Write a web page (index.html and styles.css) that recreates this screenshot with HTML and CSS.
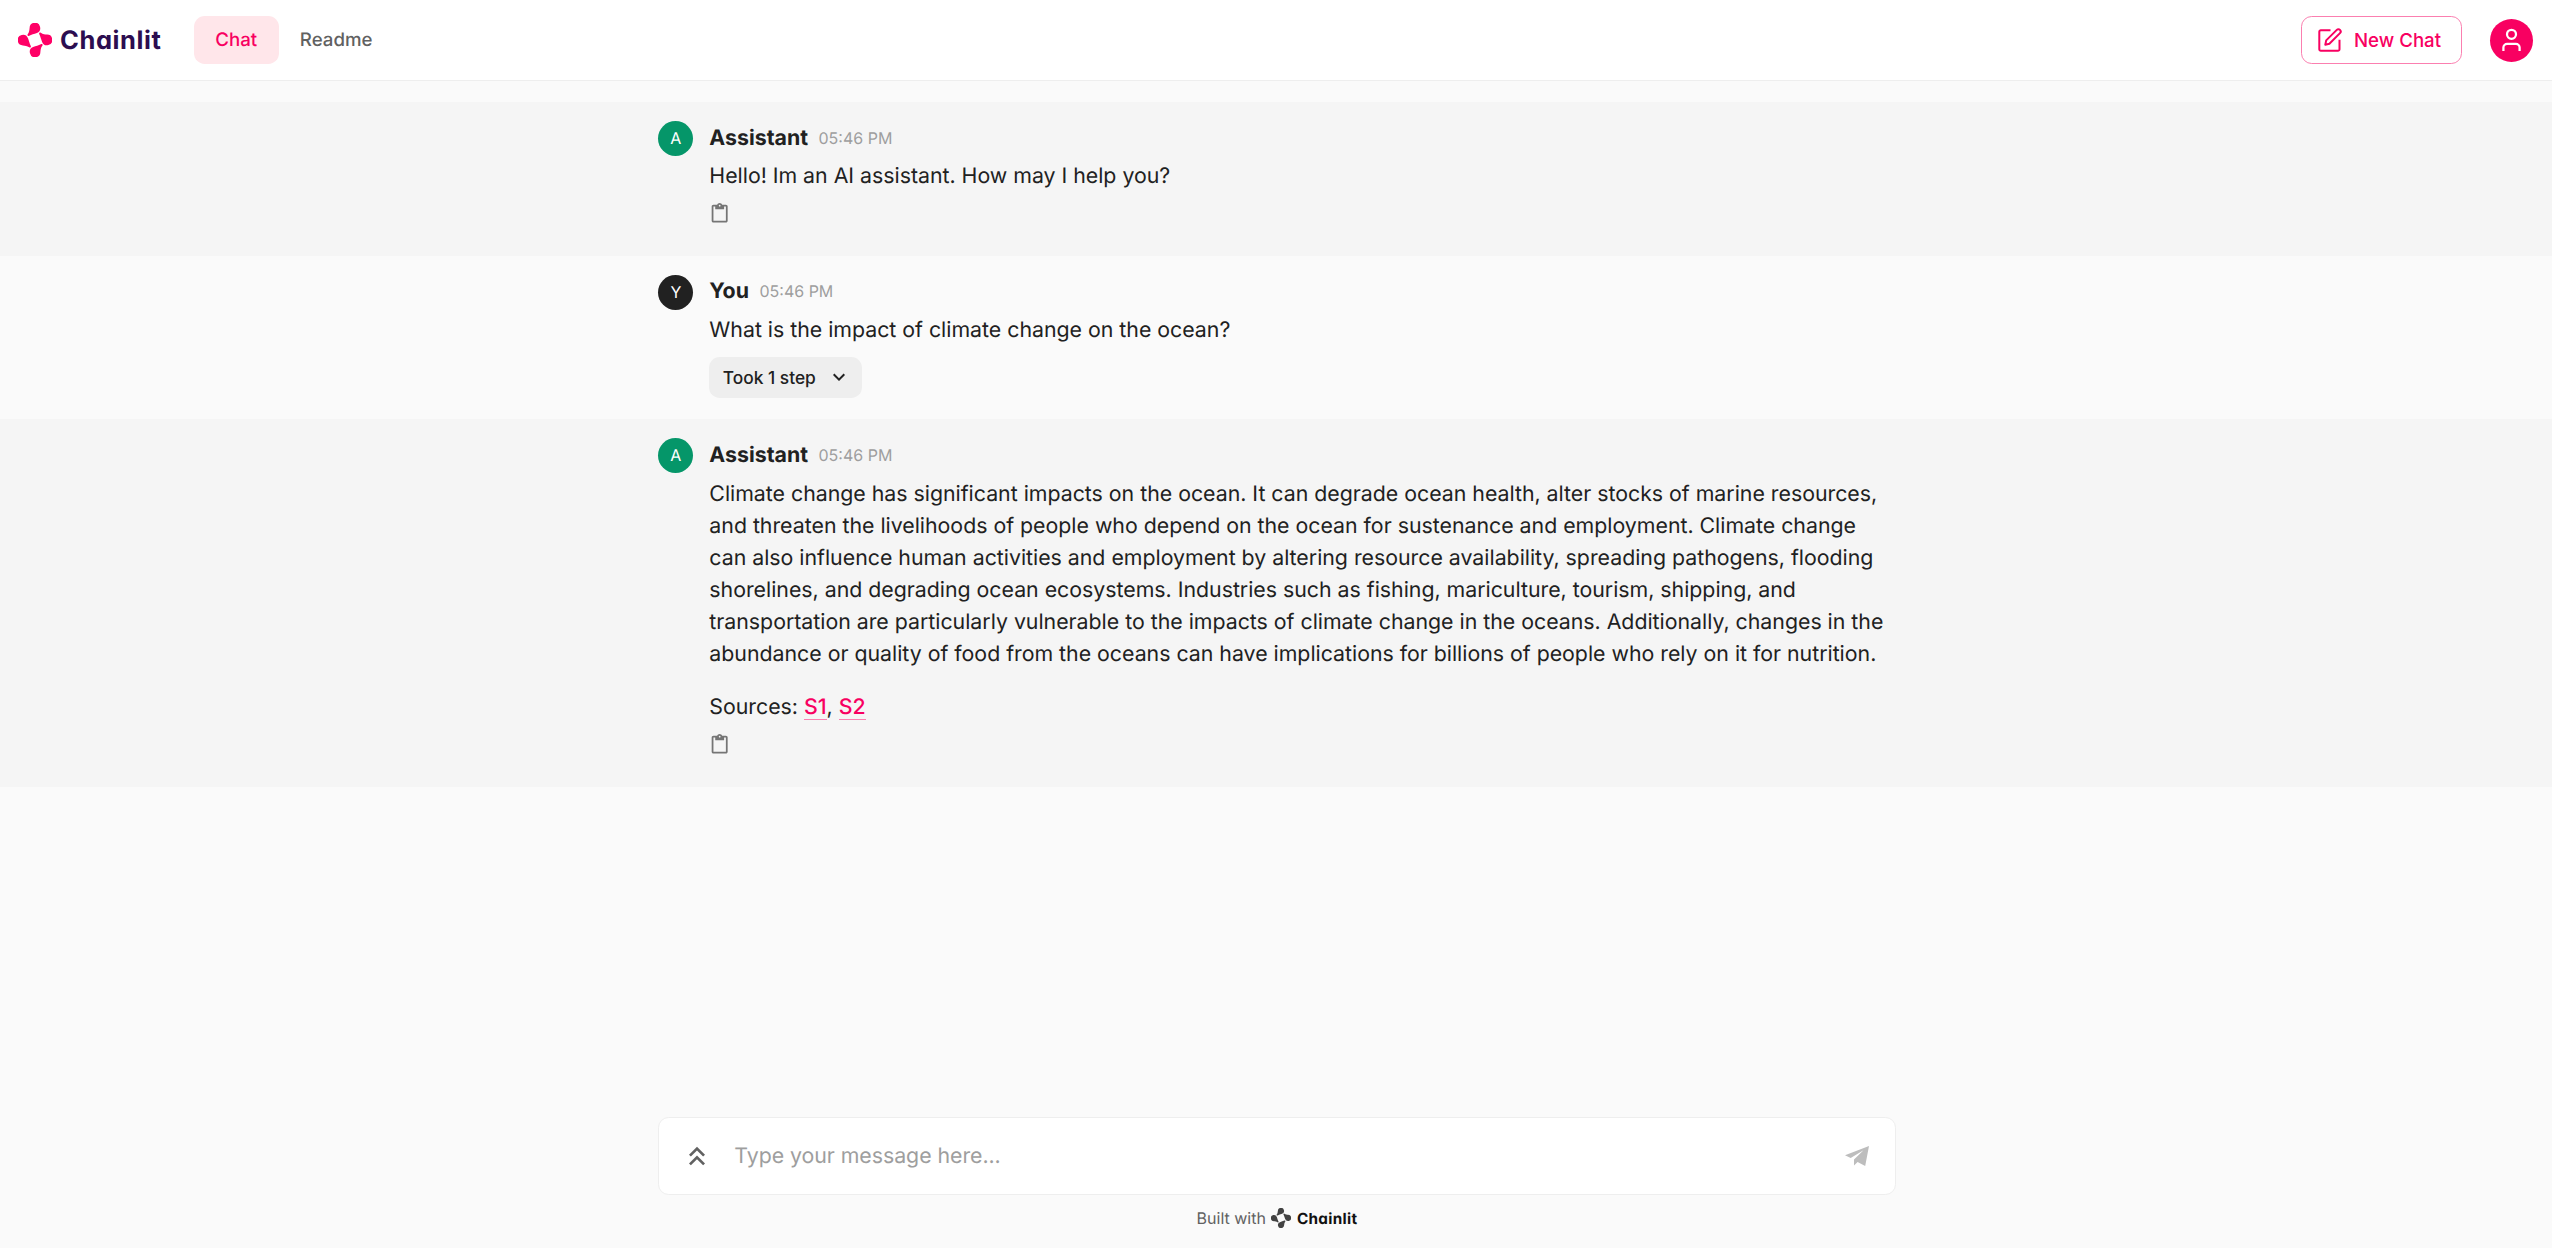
FILE: index.html
```html
<!DOCTYPE html>
<html lang="en">
<head>
<meta charset="utf-8">
<title>Chainlit</title>
<link rel="stylesheet" href="styles.css">
</head>
<body>
<svg class="defs" width="0" height="0" aria-hidden="true">
  <symbol id="mark" viewBox="0 0 34 34">
    <path id="petal" d="M11.200 12.700C9.800 13.400 8.900 12.200 9.700 11.200C11.300 9 11.400 7 11.600 4.900A5.300 5.300 0 1 1 18.900 9.900C16 11 13.500 11.500 11.200 12.700Z"/>
    <use href="#petal" transform="rotate(90 17 17)"/>
    <use href="#petal" transform="rotate(180 17 17)"/>
    <use href="#petal" transform="rotate(270 17 17)"/>
  </symbol>
  <symbol id="clipboard" viewBox="0 0 24 24">
    <path d="M19 2h-4.180C14.400.840 13.300 0 12 0S9.600.840 9.180 2H5c-1.100 0-2 .900-2 2v16c0 1.100.900 2 2 2h14c1.100 0 2-.900 2-2V4c0-1.100-.900-2-2-2zm-7 0c.550 0 1 .450 1 1s-.450 1-1 1-1-.450-1-1 .450-1 1-1zm7 18H5V4h2v3h10V4h2v16z"/>
  </symbol>
</svg>
<header class="header">
  <div class="header-left">
    <div class="logo">
      <svg class="logo-mark"><use href="#mark"/></svg>
      <span class="logo-text">Chainlit</span>
    </div>
    <nav class="nav">
      <a class="nav-item active">Chat</a>
      <a class="nav-item">Readme</a>
    </nav>
  </div>
  <div class="header-right">
    <button class="new-chat">
      <svg viewBox="0 0 24 24"><path d="M12.500 2.300H2.800a1.500 1.500 0 0 0-1.500 1.500v17.400a1.500 1.500 0 0 0 1.500 1.500h17.200a1.500 1.500 0 0 0 1.500-1.500V11.800"/><path d="M7.300 16.700l.9-4.300L18.800 1.900a2.260 2.260 0 0 1 3.200 3.200L11.400 15.700z"/></svg>
      <span>New Chat</span>
    </button>
    <div class="user">
      <svg viewBox="0 0 24 24"><circle cx="12" cy="6.500" r="4"/><path d="M4.800 21.300v-3a3.300 3.300 0 0 1 3.300-3.300h7.800a3.300 3.300 0 0 1 3.300 3.300v3"/></svg>
    </div>
  </div>
</header>
<main class="thread">
  <section class="message shaded first">
    <div class="row">
      <div class="avatar green">A</div>
      <div class="body">
        <div class="meta"><span class="name">Assistant</span><time>05:46 PM</time></div>
        <p>Hello! Im an AI assistant. How may I help you?</p>
        <svg class="copy"><use href="#clipboard"/></svg>
      </div>
    </div>
  </section>
  <section class="message second">
    <div class="row">
      <div class="avatar dark">Y</div>
      <div class="body">
        <div class="meta"><span class="name">You</span><time>05:46 PM</time></div>
        <p>What is the impact of climate change on the ocean?</p>
        <button class="steps"><span>Took 1 step</span><svg viewBox="0 0 24 24"><path d="M7.410 8.590 12 13.170l4.590-4.580L18 10l-6 6-6-6 1.410-1.410z"/></svg></button>
      </div>
    </div>
  </section>
  <section class="message shaded third">
    <div class="row">
      <div class="avatar green">A</div>
      <div class="body">
        <div class="meta"><span class="name">Assistant</span><time>05:46 PM</time></div>
        <p>Climate change has significant impacts on the ocean. It can degrade ocean health, alter stocks of marine resources, and threaten the livelihoods of people who depend on the ocean for sustenance and employment. Climate change can also influence human activities and employment by altering resource availability, spreading pathogens, flooding shorelines, and degrading ocean ecosystems. Industries such as fishing, mariculture, tourism, shipping, and transportation are particularly vulnerable to the impacts of climate change in the oceans. Additionally, changes in the abundance or quality of food from the oceans can have implications for billions of people who rely on it for nutrition.</p>
        <p class="sources">Sources: <a>S1</a>, <a>S2</a></p>
        <svg class="copy"><use href="#clipboard"/></svg>
      </div>
    </div>
  </section>
</main>
<footer class="footer">
  <div class="composer">
    <svg class="expand" viewBox="0 0 24 24"><path d="M6 17.590 7.410 19 12 14.420 16.590 19 18 17.590l-6-6z"/><path d="m6 11 1.410 1.410L12 7.830l4.590 4.580L18 11l-6-6z"/></svg>
    <span class="placeholder">Type your message here...</span>
    <svg class="send" viewBox="0 0 24 20"><path d="M24 0 0 9.300l5.700 2.600L18.500 4.200 9 13.400V19.500l3.600-3.500 7.600 4z"/></svg>
  </div>
  <div class="built">
    <span>Built with</span>
    <svg class="built-mark"><use href="#mark"/></svg>
    <span class="built-name">Chainlit</span>
  </div>
</footer>
</body>
</html>
```

FILE: styles.css
```css
* { box-sizing: border-box; }
body {
  margin: 0;
  height: 1248px;
  display: flex;
  flex-direction: column;
  overflow: hidden;
  background: #fafafa;
  color: #212121;
  font-family: Inter, "Liberation Sans", sans-serif;
  text-rendering: geometricPrecision;
}
button { font: inherit; margin: 0; border: 0; }
.defs { display: none; }

.header {
  height: 81px;
  flex: none;
  display: flex;
  justify-content: space-between;
  align-items: center;
  padding: 0 19px 0 18px;
  background: #fff;
  border-bottom: 1px solid #eee;
}
.header-left, .header-right, .logo, .nav { display: flex; align-items: center; }
.logo { width: 176px; gap: 8px; }
.logo-mark { width: 34px; height: 34px; fill: #ff0066; }
.logo-text {
  padding-top: 1px;
  color: #2c0d50;
  font-size: 25.500px;
  font-weight: 700;
  line-height: 34px;
  letter-spacing: .6px;
  font-feature-settings: "cv11";
}
.nav-item {
  height: 48px;
  padding: 0 21.330px;
  border-radius: 10.670px;
  color: #616161;
  font-size: 18.670px;
  font-weight: 500;
  line-height: 48px;
}
.nav-item.active { color: #f80061; background: #ffe6ea; }
.header-right { gap: 28px; }
.new-chat {
  width: 161px;
  height: 48px;
  display: flex;
  align-items: center;
  gap: 12px;
  padding: 0 0 0 16px;
  border: 1px solid #fb7fb0;
  border-radius: 10.670px;
  background: #fff;
  color: #f80061;
  font-size: 18.670px;
  font-weight: 500;
}
.new-chat svg { width: 24px; height: 24px; overflow: visible; fill: none; stroke: currentColor; stroke-width: 2; stroke-linejoin: round; }
.user {
  width: 43px;
  height: 43px;
  display: grid;
  place-items: center;
  border-radius: 50%;
  background: #f80061;
}
.user svg { width: 27px; height: 27px; fill: none; stroke: #fff; stroke-width: 2; }

.thread { flex: 1; padding-top: 21px; }
.message { padding-top: 19px; }
.first { height: 153.670px; }
.second { height: 163.670px; }
.third { height: 367.670px; }
.shaded { background: #f5f5f5; }
.row {
  width: 1237.330px;
  margin: 0 auto;
  padding-left: 1px;
  display: flex;
  gap: 16px;
}
.avatar {
  width: 35px;
  height: 35px;
  flex: none;
  border-radius: 50%;
  color: #fff;
  font-size: 16px;
  line-height: 35px;
  text-align: center;
}
.green { background: #059669; }
.dark { background: #212121; }
.body { flex: 1; }
.meta { display: flex; align-items: center; gap: 10.500px; height: 33px; margin-bottom: -1px; }
.name { font-size: 21.330px; font-weight: 700; }
time { color: #9e9e9e; font-size: 16px; }
p { margin: 7.330px 0 0; font-size: 21.330px; line-height: 32px; letter-spacing: -.015px; }
.sources { margin-top: 21.670px; }
.sources a {
  color: #f80061;
  font-weight: 500;
  box-shadow: inset 0 -1px #fb7fb0;
}
.copy { display: block; width: 21.330px; height: 21.330px; margin: 10.330px 0 0; fill: #757575; }
.steps {
  width: 153px;
  height: 41px;
  display: flex;
  align-items: center;
  gap: 11px;
  margin-top: 10.670px;
  padding: 0 0 0 13.500px;
  border-radius: 10.670px;
  background: #eee;
  color: #212121;
  font-size: 17.330px;
  font-weight: 500;
}
.steps svg { width: 24px; height: 24px; fill: currentColor; }

.footer { width: 1239.330px; height: 131px; margin: 0 auto; padding-left: 2px; flex: none; }
.composer {
  height: 78px;
  display: flex;
  align-items: center;
  padding: 0 26px 1px 22px;
  border: 1px solid #eee;
  border-radius: 10.670px;
  background: #fff;
}
.expand { width: 32px; height: 32px; fill: #616161; }
.placeholder { flex: 1; margin-left: 21px; color: #9e9e9e; font-size: 21.330px; letter-spacing: -.050px; }
.send { width: 24px; height: 20px; fill: #bdbdbd; }
.built {
  display: flex;
  justify-content: center;
  align-items: center;
  height: 20px;
  margin-top: 13px;
  color: #616161;
  font-size: 16px;
}
.built-mark { width: 20px; height: 20px; margin: 0 6px 0 5px; fill: #424242; }
.built-name {
  padding-top: 1px;
  color: #111;
  font-size: 15.300px;
  font-weight: 700;
  line-height: 20px;
  letter-spacing: .3px;
  font-feature-settings: "cv11";
}
```
